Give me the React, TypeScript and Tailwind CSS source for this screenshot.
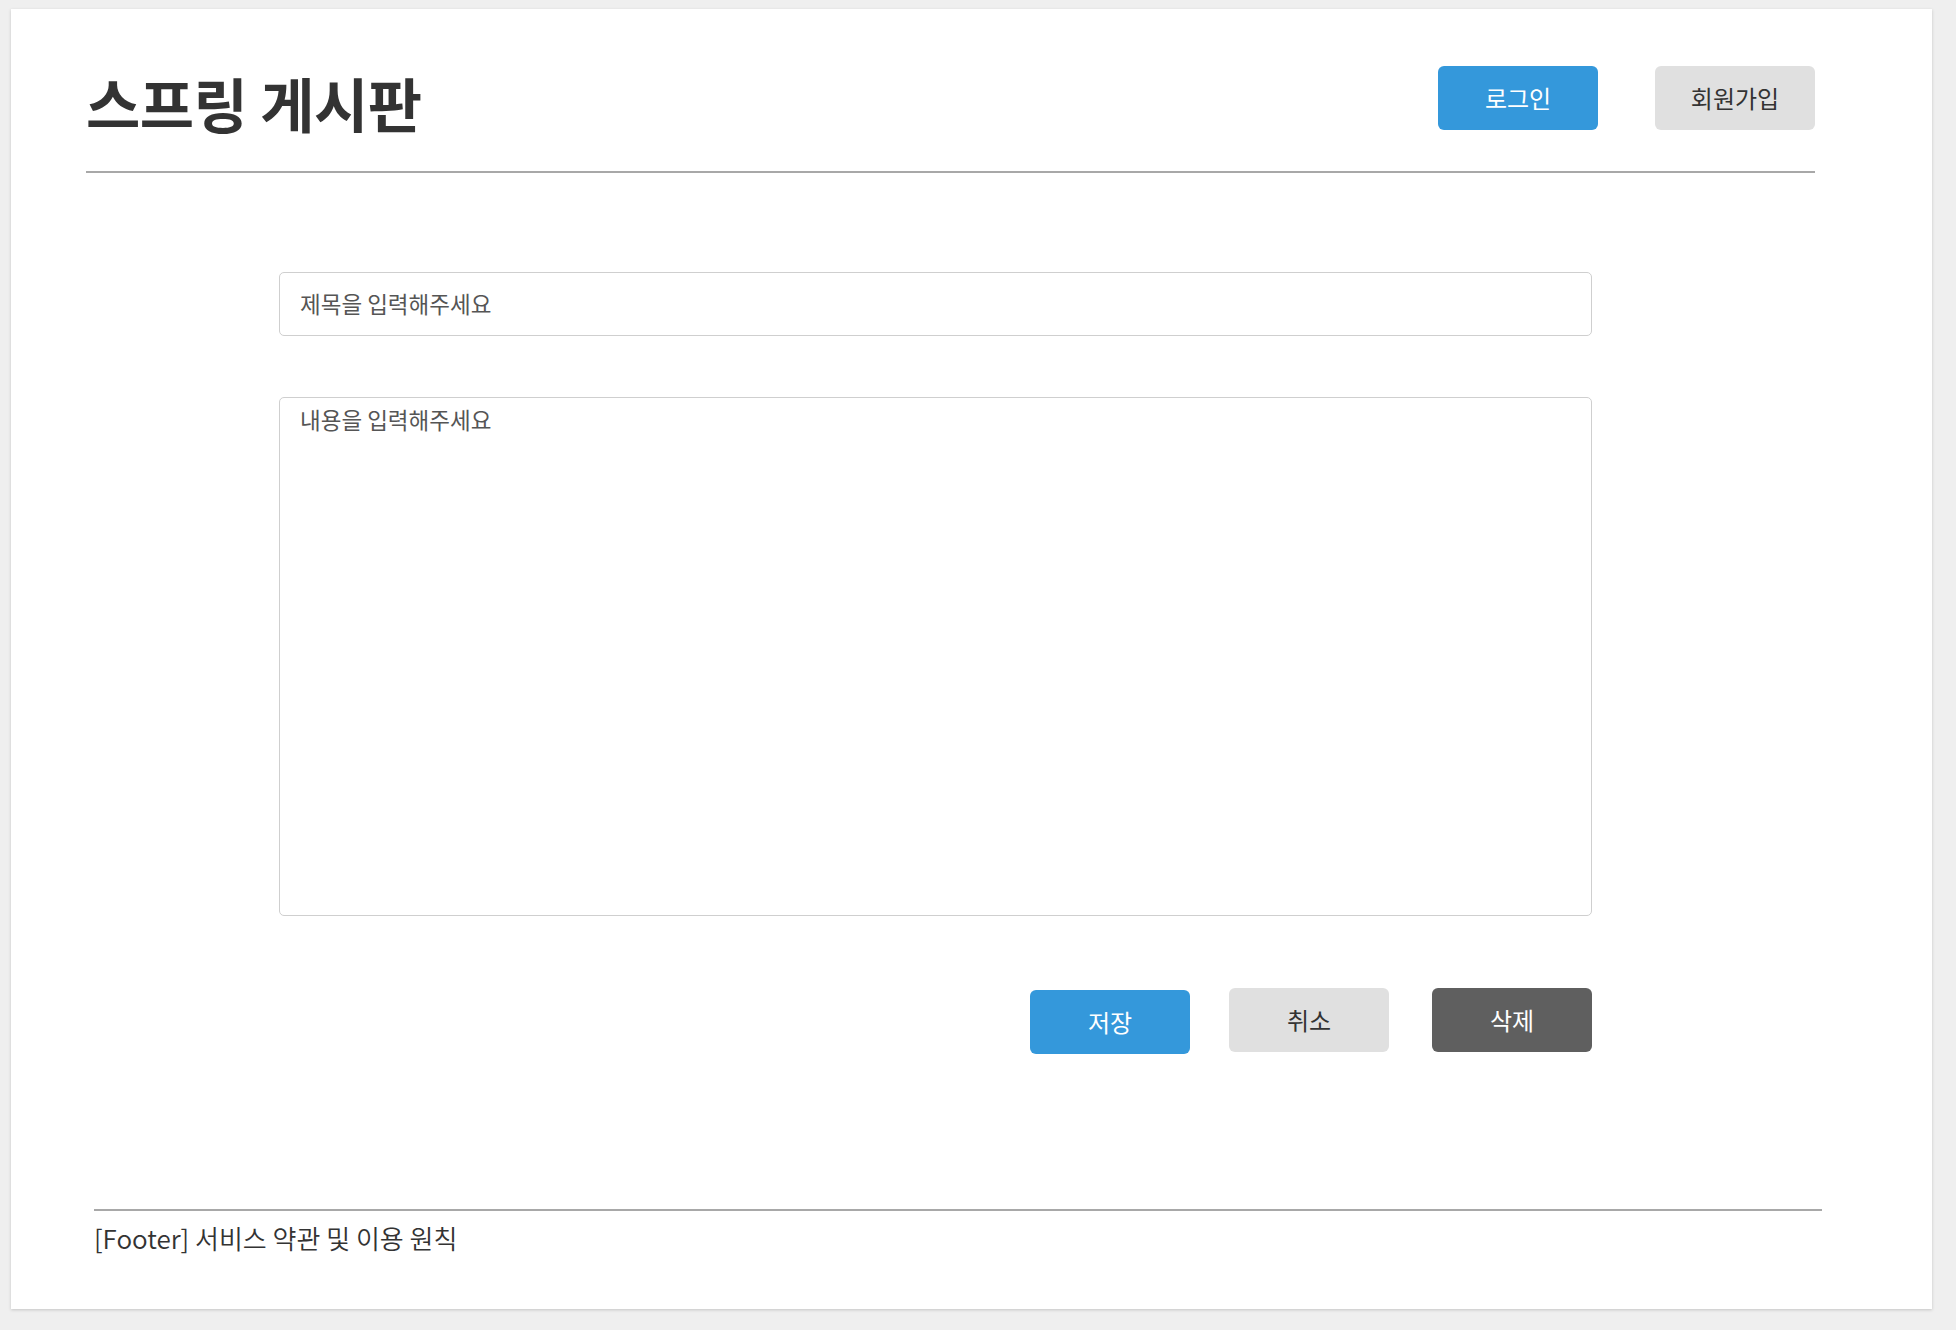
const font = { fontFamily: '"Noto Sans CJK KR", "Noto Sans", sans-serif' }

export default function App() {
  return (
    <div className="min-h-screen w-full bg-[#efefef] pt-[9px] pl-[11px]" style={font}>
      <div className="w-[1921px] h-[1300px] bg-white shadow-[0_1px_3px_rgba(0,0,0,0.18)] flex flex-col">
        {/* Header */}
        <header className="ml-[75px] w-[1729px] mt-[57px] pb-[41px] border-b-2 border-[#a8a8a8] flex items-start justify-between">
          <h1 className="mt-[10px] h-[54px] text-[59px] leading-[54px] font-bold text-[#333] tracking-[-0.5px]">
            스프링 게시판
          </h1>
          <div className="flex items-center gap-[57px]">
            <button className="w-[160px] h-[64px] rounded-[6px] bg-[#3498db] text-white text-[24px]">
              로그인
            </button>
            <button className="w-[160px] h-[64px] rounded-[6px] bg-[#e0e0e0] text-[#333] text-[24px]">
              회원가입
            </button>
          </div>
        </header>

        {/* Form */}
        <main className="ml-[268px] w-[1313px] mt-[99px] flex flex-col">
          <input
            type="text"
            placeholder="제목을 입력해주세요"
            className="h-[64px] w-full rounded-[5px] border border-[#cfcfcf] px-[20px] pb-[3px] text-[22.5px] text-[#333] placeholder:text-[#555] outline-none"
          />
          <textarea
            placeholder="내용을 입력해주세요"
            className="mt-[61px] h-[519px] w-full resize-none rounded-[5px] border border-[#cfcfcf] px-[20px] pt-[5px] text-[22.5px] text-[#333] placeholder:text-[#555] outline-none"
          />
          <div className="mt-[72px] flex items-start justify-end">
            <button className="mt-[2px] w-[160px] h-[64px] rounded-[6px] bg-[#3498db] text-white text-[24px]">
              저장
            </button>
            <button className="ml-[39px] w-[160px] h-[64px] rounded-[6px] bg-[#e0e0e0] text-[#333] text-[24px]">
              취소
            </button>
            <button className="ml-[43px] w-[160px] h-[64px] rounded-[6px] bg-[#5f5f5f] text-white text-[24px]">
              삭제
            </button>
          </div>
        </main>

        {/* Footer */}
        <footer className="ml-[83px] w-[1728px] mt-[155px] border-t-2 border-[#a8a8a8] pt-[9px]">
          <p className="text-[26px] leading-[36px] text-[#333] font-[350]">[Footer] 서비스 약관 및 이용 원칙</p>
        </footer>
      </div>
    </div>
  )
}
